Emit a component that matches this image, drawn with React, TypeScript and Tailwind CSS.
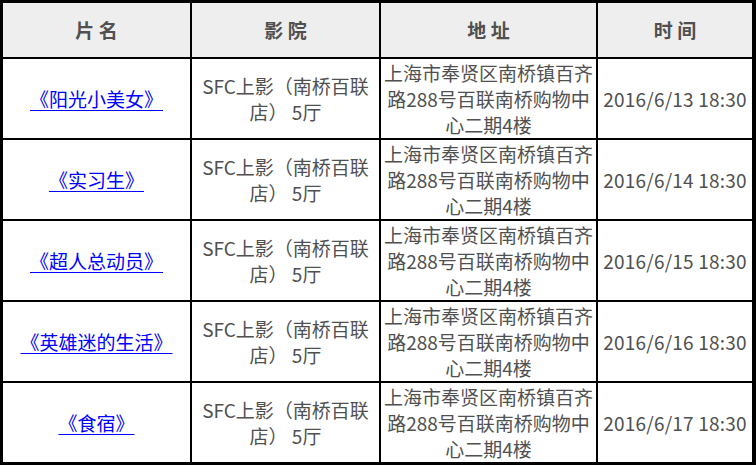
import React from 'react';

const rows = [
  { title: '《阳光小美女》', time: '2016/6/13 18:30' },
  { title: '《实习生》', time: '2016/6/14 18:30' },
  { title: '《超人总动员》', time: '2016/6/15 18:30' },
  { title: '《英雄迷的生活》', time: '2016/6/16 18:30' },
  { title: '《食宿》', time: '2016/6/17 18:30' },
];

const headers = ['片 名', '影 院', '地 址', '时 间'];

const App: React.FC = () => {
  return (
    <div
      className="w-[756px] h-[465px] bg-black p-[3px] pr-[4px] grid grid-cols-[187px_187px_215px_154px] grid-rows-[54px_repeat(5,79px)] gap-[2px] text-[19px] text-[#505050] leading-[26px]"
      style={{ fontFamily: '"Microsoft YaHei", "Noto Sans CJK SC", sans-serif' }}
    >
      {headers.map((h) => (
        <div key={h} className="bg-[#eeeeee] flex items-center justify-center font-bold whitespace-pre">
          {h}
        </div>
      ))}
      {rows.map((r) => (
        <React.Fragment key={r.time}>
          <div className="bg-white flex items-center justify-center">
            <a href="#" className="text-[#0000ff] underline underline-offset-[3px]">
              {r.title}
            </a>
          </div>
          <div className="bg-white flex flex-col items-center justify-center text-center">
            <span>SFC上影（南桥百联</span>
            <span>店） 5厅</span>
          </div>
          <div className="bg-white flex flex-col items-center justify-center text-center">
            <span>上海市奉贤区南桥镇百齐</span>
            <span>路288号百联南桥购物中</span>
            <span>心二期4楼</span>
          </div>
          <div className="bg-white flex items-center justify-center whitespace-nowrap tracking-[0.2px]">
            {r.time}
          </div>
        </React.Fragment>
      ))}
    </div>
  );
};

export default App;
